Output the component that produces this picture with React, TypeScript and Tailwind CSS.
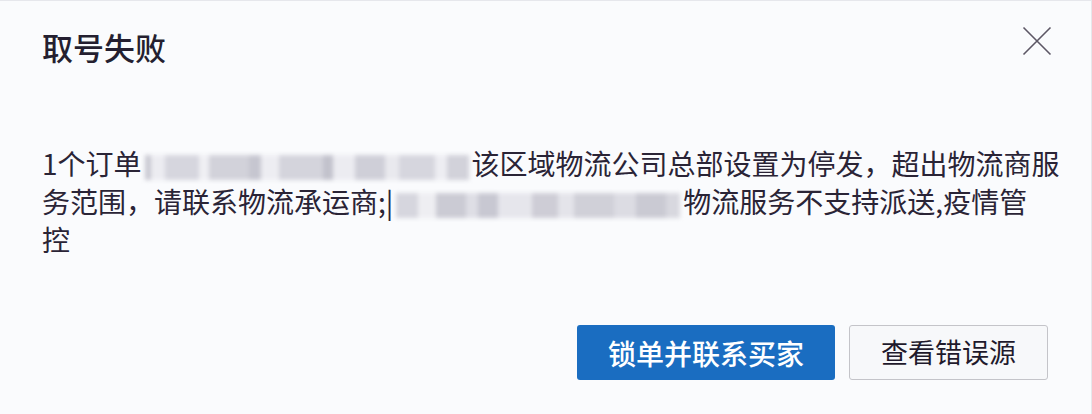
const font = { fontFamily: '"Microsoft YaHei", "Noto Sans CJK SC", "Noto Sans", sans-serif' }

// redacted (pixelated) bits of the message
const blurA: [number, string][] = [
  [6, '#c9c9d2'], [14, '#ececf1'], [34, '#d6d6de'], [10, '#efeff3'], [40, '#d2d2da'], [12, '#c6c6d0'], [18, '#ededf2'],
  [44, '#d4d4dc'], [10, '#c2c2cc'], [22, '#ececf1'], [30, '#cfcfd8'], [14, '#e9e9ee'], [36, '#d6d6de'], [12, '#ededf2'], [22, '#d2d2da'],
]
const blurB: [number, string][] = [
  [22, '#d6d6de'], [18, '#eeeef2'], [30, '#cbcbd4'], [12, '#dedee5'], [20, '#c8c8d2'], [34, '#e6e6ec'], [26, '#cecdd6'],
  [16, '#e4e4ea'], [40, '#d0d0d8'], [22, '#dcdce3'], [30, '#cacad3'], [14, '#d8d8df'],
]

function Redacted({ parts }: { parts: [number, string][] }) {
  return (
    <span className="inline-flex align-[-5px] h-[25px] mx-[3px] blur-[2px] bg-[#e9e9ee]">
      {parts.map(([w, c], i) => (
        <span key={i} className="h-full" style={{ width: w, background: c }} />
      ))}
    </span>
  )
}

export default function App() {
  return (
    <div
      className="w-[1092px] h-[414px] bg-[#fafbfd] border-t border-r border-[#e6e7ec] flex flex-col text-[#241f30]"
      style={font}
    >
      <div className="flex justify-between items-start pl-[42px] pr-[39px] pt-[24px]">
        <h1 className="text-[31px] leading-[44px] font-medium">取号失败</h1>
        <button className="mt-[1px] w-[30px] h-[30px] text-[#5c5765]">
          <svg viewBox="0 0 30 30" className="w-[30px] h-[30px]" fill="none" stroke="currentColor" strokeWidth="1.6">
            <path d="M1.5 1.5 L28.5 28.5 M28.5 1.5 L1.5 28.5" />
          </svg>
        </button>
      </div>

      <p className="mt-[75px] pl-[42px] pr-[30px] text-[28px] leading-[38px] text-[#2a2436]">
        1个订单
        <Redacted parts={blurA} />
        该区域物流公司总部设置为停发，超出物流商服务范围，请联系物流承运商;|
        <Redacted parts={blurB} />
        物流服务不支持派送,疫情管
        <br />
        控
      </p>

      <div className="mt-auto flex justify-end gap-[14px] pr-[43px] pb-[34px]">
        <button className="w-[258px] h-[55px] rounded-[3px] bg-[#1a6dc1] text-white text-[28px] font-medium">
          锁单并联系买家
        </button>
        <button className="w-[199px] h-[55px] rounded-[3px] border border-[#c4c4c9] bg-[#f7f8fa] text-[#1f1a2c] text-[27px]">
          查看错误源
        </button>
      </div>
    </div>
  )
}
